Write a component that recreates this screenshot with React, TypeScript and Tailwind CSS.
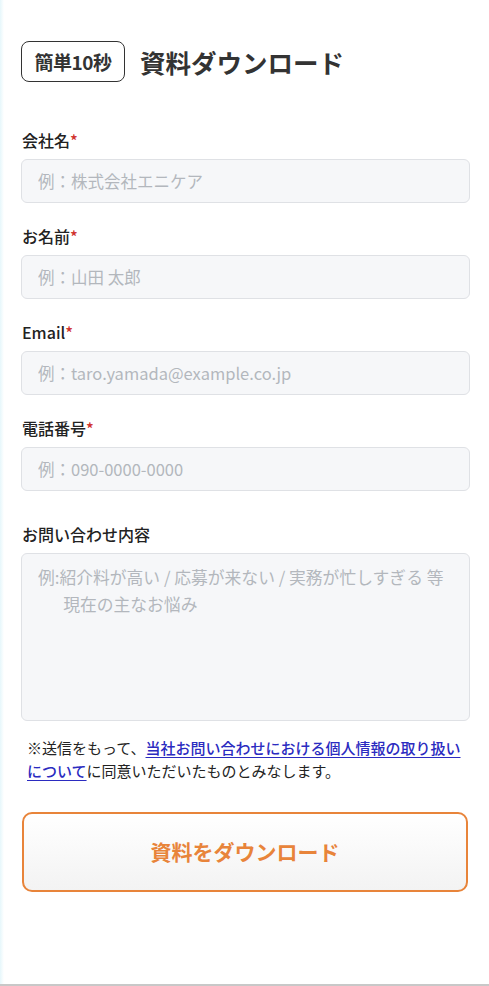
import React from 'react';

const fields = [
  { label: '会社名', placeholder: '例：株式会社エニケア', required: true },
  { label: 'お名前', placeholder: '例：山田 太郎', required: true },
  { label: 'Email', placeholder: '例：taro.yamada@example.co.jp', required: true },
  { label: '電話番号', placeholder: '例：090-0000-0000', required: true },
];

const App: React.FC = () => {
  return (
    <div
      className="relative min-h-[986px] w-[489px] bg-white text-[#333]"
      style={{ fontFamily: '"Noto Sans CJK JP", "Noto Sans", sans-serif' }}
    >
      <div className="absolute left-0 top-0 h-full w-[4px] bg-gradient-to-r from-[#e6f7fb] to-white" />
      <div className="pl-[21px] pr-[19px] pt-[41px]">
        <div className="flex items-center gap-[15px]">
          <span className="flex h-[41px] w-[104px] items-center justify-center rounded-[8px] border border-[#333] text-[19px] font-bold leading-none tracking-[-0.5px] text-[#333]">
            簡単10秒
          </span>
          <h1 className="text-[25.5px] font-bold leading-none text-[#333]">資料ダウンロード</h1>
        </div>

        <div className="mt-[46px] flex flex-col">
          {fields.map((f) => (
            <div key={f.label} className="mb-[21px]">
              <label className="block pl-[1px] text-[16px] font-medium leading-[24px] text-[#222]">
                {f.label}
                {f.required && <span className="text-[#d0312d]">*</span>}
              </label>
              <input
                type="text"
                placeholder={f.placeholder}
                className="mt-[7px] block h-[44px] w-full rounded-[6px] border border-[#dfe1e5] bg-[#f6f7f9] px-[16px] text-[16.5px] placeholder:text-[#b3b7bd] focus:outline-none"
              />
            </div>
          ))}

          <div className="mt-[10px]">
            <label className="block pl-[1px] text-[16px] font-medium leading-[24px] text-[#222]">
              お問い合わせ内容
            </label>
            <textarea
              placeholder={'例:紹介料が高い / 応募が来ない / 実務が忙しすぎる 等\n\u3000\u2002現在の主なお悩み'}
              className="mt-[7px] block h-[168px] w-full resize-none rounded-[6px] border border-[#dfe1e5] bg-[#f6f7f9] px-[16px] pt-[10px] text-[16.8px] leading-[27px] placeholder:text-[#b3b7bd] focus:outline-none"
            />
          </div>
        </div>

        <p className="mt-[15px] pl-[6px] text-[15px] leading-[23px] text-[#222]">
          ※送信をもって、
          <a href="#" className="font-medium text-[#2b2bc0] underline underline-offset-[3px]">
            当社お問い合わせにおける個人情報の取り扱いについて
          </a>
          に同意いただいたものとみなします。
        </p>

        <button className="mx-[1px] mt-[30px] flex h-[80px] w-[446px] items-center justify-center rounded-[10px] border-2 border-[#e8843a] bg-gradient-to-b from-white to-[#f3f3f3] text-[21px] font-bold text-[#e8843a]">
          資料をダウンロード
        </button>
      </div>
      <div className="absolute bottom-0 left-0 h-[2px] w-full bg-[#c8c8c8]" />
    </div>
  );
};

export default App;
